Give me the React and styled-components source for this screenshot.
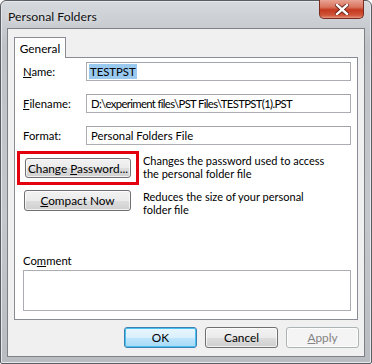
import React from 'react'
import styled, { createGlobalStyle } from 'styled-components'

const GlobalStyle = createGlobalStyle`
  html, body { margin:0; padding:0; background:#fff; }
  body { font-family:Lato,"Noto Sans",sans-serif; font-size:11.3px; color:#000; }
`

const Frame = styled.div`
  width:372px;
  height:364px;
  box-sizing:border-box;
  display:flex;
  flex-direction:column;
  border:1px solid #5a5d62;
  border-radius:6px 6px 2px 2px;
  background:linear-gradient(180deg,#d6d9dd 0%,#bfc3c8 12%,#c4c7cb 60%,#b9bcc0 100%);
  box-shadow:inset 0 0 0 1px #e6e8ea;
`

const TitleBar = styled.div`
  height:27px;
  display:flex;
  align-items:center;
  justify-content:space-between;
  padding-left:7px;
  padding-right:7px;
`

const Title = styled.span`
  font-size:12.3px;
  color:#111;
  margin-top:3px;
  text-shadow:0 0 6px rgba(255,255,255,0.9);
`

const CloseBtn = styled.div`
  align-self:flex-start;
  width:45px;
  height:19px;
  margin-top:-1px;
  border:1px solid #7b2a22;
  border-top:none;
  border-radius:0 0 5px 5px;
  background:linear-gradient(180deg,#e8a393 0%,#d9725c 40%,#c4391f 55%,#d0553a 85%,#e3977f 100%);
  display:flex;
  align-items:center;
  justify-content:center;
  box-sizing:border-box;
`

const Client = styled.div`
  flex:1;
  margin:0 6px 6px 6px;
  border:1px solid #7d8186;
  background:#f0f0f0;
  padding:8px 6px 0 6px;
  display:flex;
  flex-direction:column;
`

const TabStrip = styled.div`
  display:flex;
  height:20px;
  position:relative;
  z-index:1;
`

const Tab = styled.div`
  width:52px;
  height:21px;
  box-sizing:border-box;
  border:1px solid #898c95;
  border-bottom:none;
  background:#fff;
  display:flex;
  align-items:center;
  justify-content:center;
  padding-top:1px;
  font-size:11.8px;
`

const Panel = styled.div`
  height:263px;
  box-sizing:border-box;
  border:1px solid #898c95;
  background:#fff;
  padding:4px 6px 0 8px;
  display:flex;
  flex-direction:column;
`

const FieldRow = styled.div`
  display:flex;
  align-items:center;
  height:19px;
  margin-bottom:${p => p.gap || 13}px;
`

const Label = styled.span`
  width:63px;
  flex-shrink:0;
`

const Field = styled.div`
  flex:1;
  height:19px;
  box-sizing:border-box;
  border:1px solid #abadb3;
  border-top-color:#a0a3aa;
  background:#fff;
  display:flex;
  align-items:center;
  padding-left:${p => p.pad || 4}px;
  white-space:nowrap;
  overflow:hidden;
  letter-spacing:${p => p.tight ? '-0.65px' : 'normal'};
`

const Selected = styled.span`
  background:#99c9ef;
  color:#000;
  padding:0 1px;
  line-height:15px;
`

const ActionRow = styled.div`
  display:flex;
  align-items:flex-start;
  margin-bottom:${p => p.gap || 0}px;
`

const Highlight = styled.div`
  width:122px;
  height:34px;
  box-sizing:border-box;
  border:3px solid #e3000f;
  margin-left:-6px;
  margin-right:4px;
  display:flex;
  align-items:center;
  justify-content:center;
`

const Button = styled.div`
  width:${p => p.w || 73}px;
  height:${p => p.h || 21}px;
  box-sizing:border-box;
  border:1px solid ${p => p.disabled ? '#adb2b5' : p.primary ? '#3c7fb1' : '#707070'};
  border-radius:3px;
  background:${p => p.disabled
    ? '#f4f4f4'
    : p.primary
      ? 'linear-gradient(180deg,#eaf6fd 0%,#d9f0fc 50%,#bee6fd 51%,#a7d9f5 100%)'
      : 'linear-gradient(180deg,#f2f2f2 0%,#ebebeb 50%,#dddddd 51%,#cfcfcf 100%)'};
  box-shadow:${p => p.primary ? 'inset 0 0 0 1px #48c0f2' : 'inset 0 0 0 1px rgba(255,255,255,0.7)'};
  color:${p => p.disabled ? '#838383' : '#000'};
  display:flex;
  align-items:center;
  justify-content:center;
  flex-shrink:0;
  white-space:pre;
  font-size:11.8px;
`

const Desc = styled.div`
  line-height:13px;
  margin-top:${p => p.top || 0}px;
  width:${p => p.w || 192}px;
  font-size:11px;
`

const Comment = styled.div`
  margin-top:auto;
  margin-bottom:8px;
  display:flex;
  flex-direction:column;
`

const CommentBox = styled.div`
  height:41px;
  margin-top:3px;
  box-sizing:border-box;
  border:1px solid #abadb3;
  background:#fff;
`

const Footer = styled.div`
  display:flex;
  justify-content:flex-end;
  gap:8px;
  padding-top:7px;
  margin-right:-1px;
`

const U = styled.span`
  text-decoration:underline;
`

const CloseGlyph = () => (
  <svg width="14" height="11" viewBox="0 0 14 11">
    <path d="M2 1 L12 10 M12 1 L2 10" stroke="#5a1a12" strokeWidth="4" strokeLinecap="square" />
    <path d="M2 1 L12 10 M12 1 L2 10" stroke="#fff" strokeWidth="2.4" strokeLinecap="square" />
  </svg>
)

export default function App() {
  return (
    <>
      <GlobalStyle />
      <Frame>
        <TitleBar>
          <Title>Personal Folders</Title>
          <CloseBtn><CloseGlyph /></CloseBtn>
        </TitleBar>
        <Client>
          <TabStrip>
            <Tab>General</Tab>
          </TabStrip>
          <Panel>
            <FieldRow>
              <Label><U>N</U>ame:</Label>
              <Field pad={2}><Selected>TESTPST</Selected></Field>
            </FieldRow>
            <FieldRow>
              <Label><U>F</U>ilename:</Label>
              <Field tight>D:\experiment files\PST Files\TESTPST(1).PST</Field>
            </FieldRow>
            <FieldRow gap={6}>
              <Label>Format:</Label>
              <Field>Personal Folders File</Field>
            </FieldRow>
            <ActionRow gap={5}>
              <Highlight>
                <Button w={106} h={20}><span>Change <U>P</U>assword...</span></Button>
              </Highlight>
              <Desc top={3}>Changes the password used to access the personal folder file</Desc>
            </ActionRow>
            <ActionRow>
              <Button w={107} style={{ marginLeft: 1, marginRight: 12 }}><span><U>C</U>ompact Now</span></Button>
              <Desc w={172}>Reduces the size of your personal folder file</Desc>
            </ActionRow>
            <Comment>
              <span>Co<U>m</U>ment</span>
              <CommentBox />
            </Comment>
          </Panel>
          <Footer>
            <Button primary><span>OK</span></Button>
            <Button><span>Cancel</span></Button>
            <Button disabled><span><U>A</U>pply</span></Button>
          </Footer>
        </Client>
      </Frame>
    </>
  )
}
